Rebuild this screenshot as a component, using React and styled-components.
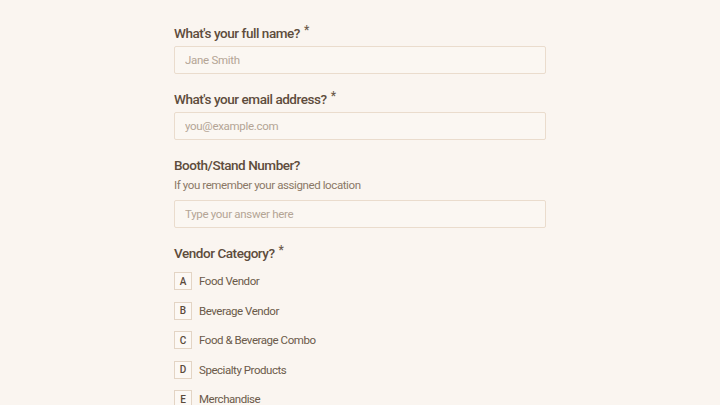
import styled, { createGlobalStyle } from "styled-components";

const GlobalStyle = createGlobalStyle`
  html, body {
    margin: 0;
    padding: 0;
    background: #faf5f0;
  }
  body {
    font-family: Roboto, "Noto Sans", sans-serif;
    color: #5b4a3b;
  }
`;

const Page = styled.div`
  min-height: 100vh;
  display: flex;
  justify-content: center;
  padding-top: 24px;
  box-sizing: border-box;
`;

const Form = styled.form`
  width: 372px;
  display: flex;
  flex-direction: column;
  gap: 16px;
`;

const Field = styled.div`
  display: flex;
  flex-direction: column;
`;

const Label = styled.label`
  display: block;
  font-size: 13.5px;
  font-weight: 500;
  color: #5e4c3c;
  letter-spacing: -0.45px;
  line-height: 18px;
  height: 18px;
`;

const Star = styled.span`
  display: inline-block;
  font-size: 12px;
  line-height: 0;
  margin-left: 4px;
  color: #6d5b4b;
  vertical-align: top;
  position: relative;
  top: 6px;
`;

const Hint = styled.p`
  margin: 4px 0 0;
  font-size: 11.5px;
  line-height: 14px;
  color: #8a7866;
  letter-spacing: -0.4px;
`;

const Input = styled.input`
  margin-top: ${(p) => p.$gap}px;
  height: 28px;
  box-sizing: border-box;
  border: 1px solid #eadccd;
  background: #fbf7f2;
  border-radius: 2px;
  padding: 0 10px;
  font-family: inherit;
  font-size: 11.5px;
  letter-spacing: -0.3px;
  color: #5b4a3b;
  outline: none;
  &::placeholder {
    color: #b4a595;
  }
`;

const Options = styled.div`
  display: flex;
  flex-direction: column;
  gap: 11.6px;
  margin-top: 10px;
`;

const Option = styled.div`
  display: flex;
  align-items: center;
  gap: 7px;
`;

const KeyBox = styled.span`
  width: 18px;
  height: 18px;
  box-sizing: border-box;
  border: 1px solid #e3d4c4;
  background: #fcf8f4;
  display: flex;
  align-items: center;
  justify-content: center;
  font-size: 10px;
  font-weight: 500;
  color: #5b4a3b;
`;

const OptionText = styled.span`
  font-size: 11.5px;
  color: #6b5a4a;
  letter-spacing: -0.45px;
`;

const categories = [
  ["A", "Food Vendor"],
  ["B", "Beverage Vendor"],
  ["C", "Food & Beverage Combo"],
  ["D", "Specialty Products"],
  ["E", "Merchandise"],
];

export default function App() {
  return (
    <>
      <GlobalStyle />
      <Page>
        <Form>
          <Field>
            <Label>
              What's your full name?<Star>*</Star>
            </Label>
            <Input $gap={4} placeholder="Jane Smith" />
          </Field>
          <Field>
            <Label>
              What's your email address?<Star>*</Star>
            </Label>
            <Input $gap={4} placeholder="you@example.com" />
          </Field>
          <Field>
            <Label>Booth/Stand Number?</Label>
            <Hint>If you remember your assigned location</Hint>
            <Input $gap={8} placeholder="Type your answer here" />
          </Field>
          <Field>
            <Label>
              Vendor Category?<Star>*</Star>
            </Label>
            <Options>
              {categories.map(([key, text]) => (
                <Option key={key}>
                  <KeyBox>{key}</KeyBox>
                  <OptionText>{text}</OptionText>
                </Option>
              ))}
            </Options>
          </Field>
        </Form>
      </Page>
    </>
  );
}
